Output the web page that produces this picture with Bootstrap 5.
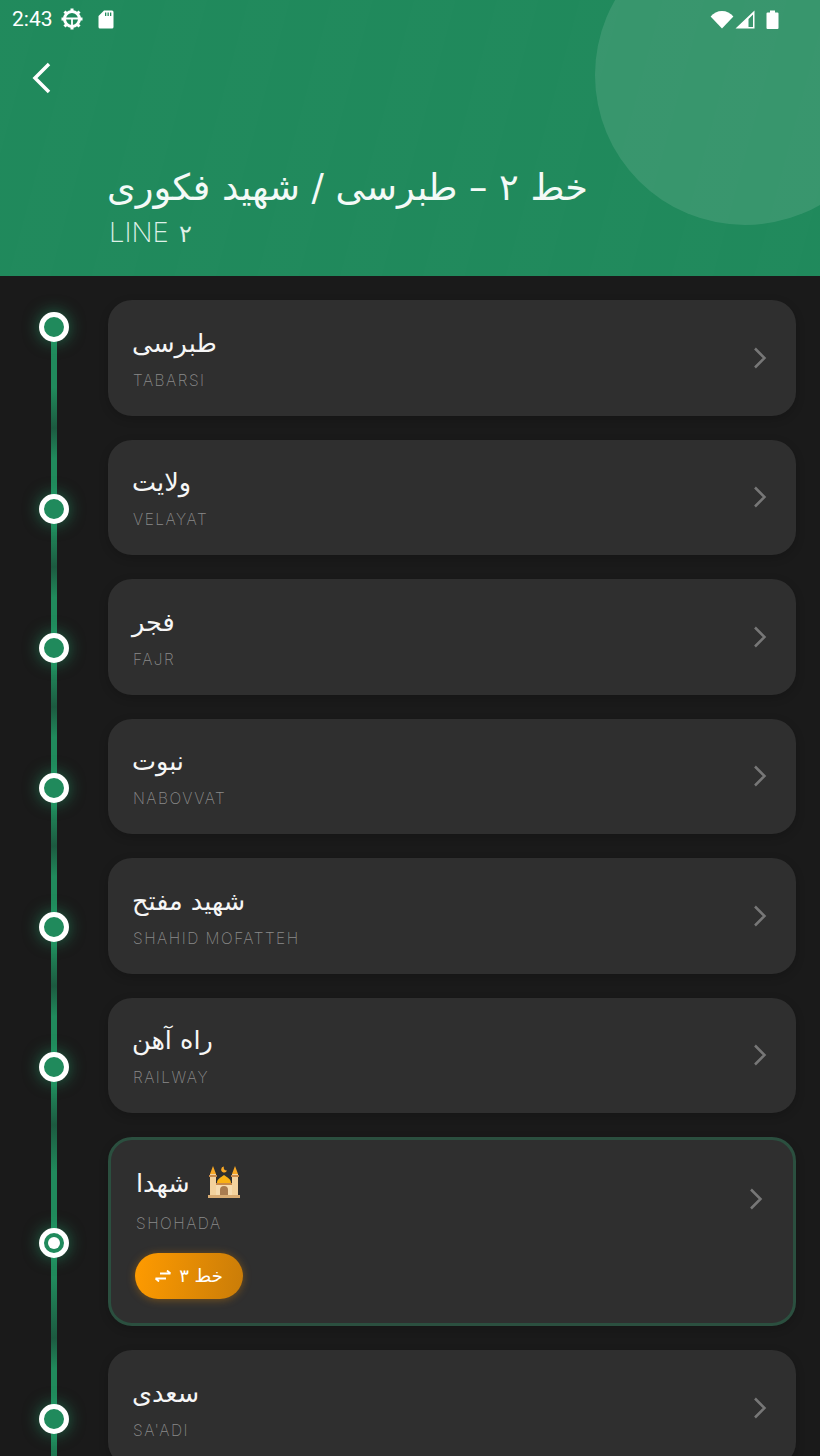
<!DOCTYPE html>
<html lang="fa">
<head>
    <meta charset="UTF-8">
    <meta name="viewport" content="width=device-width, initial-scale=1.0">
    <title>Line 2</title>
    <link href="https://cdn.jsdelivr.net/npm/bootstrap@5.3.0/dist/css/bootstrap.min.css" rel="stylesheet">
    <style>
        body { background: #1a1a1a; font-family: "DejaVu Sans", sans-serif; }
        .line-header { height: 276px; background-color: #208a5c; background-image: repeating-linear-gradient(105deg, rgba(255,255,255,.005) 0 40px, rgba(0,0,0,.005) 40px 80px); }
        .header-disc { position: absolute; width: 300px; height: 300px; top: -75px; left: 595px; border-radius: 50%; background: rgba(255,255,255,.11); }
        .status-row { height: 38px; padding: 0 12px; color: #fff; font: 400 21px/38px Roboto, sans-serif; }
        .status-clock { width: 49px; }
        .status-sd { margin-left: 15px; }
        .status-right { padding-right: 29px; }
        .status-signal { margin-left: 1px; }
        .status-battery { margin-left: 11px; }
        .back-btn { margin: 20px 0 0 28px; height: 40px; }
        .title-block { padding: 65px 0 0 108px; }
        .line-title { font-size: 36.7px; font-weight: 400; line-height: 50px; color: #f4faf7; margin: 0; width: 480px; white-space: nowrap; }
        .line-sub { font: 200 27.5px/32px Inter, sans-serif; color: #dff0e8; margin-top: 3px; padding-left: 1px; }
        .sub-digit { margin-left: 10px; font-size: 24px; }
        .stop-list { padding-top: 12px; }
        .stop-row { padding: 12px 24px 12px 0; }
        .stop-rail { width: 108px; flex: none; }
        .rail-line { position: absolute; left: 51px; top: 0; bottom: 0; width: 6px; background: linear-gradient(180deg, #1c5a40, #208a5c 22%, #208a5c 72%, #1c5a40); }
        .stop-row:first-child .rail-line { top: 39px; background: linear-gradient(180deg, #208a5c, #208a5c 60%, #1c5a40); }
        .stop-dot { position: absolute; left: 39px; top: 50%; margin-top: -3.5px; width: 30px; height: 30px; border: 5px solid #fff; border-radius: 50%; background: #208a5c; box-shadow: 0 0 16px rgba(40,190,125,.5); }
        .stop-row:first-child .stop-dot { top: 24px; margin-top: 0; }
        .stop-dot.is-transfer::after { content: ""; position: absolute; left: 4px; top: 4px; width: 12px; height: 12px; border-radius: 50%; background: #fff; }
        .stop-card { min-height: 115.5px; padding: 0 29px 0 24px; background: #2f2f2f; border-radius: 24px; box-shadow: 0 3px 10px rgba(0,0,0,.18); }
        .stop-card.is-transfer { height: 189px; border: 3px solid #2b4f3f; padding: 0 30px 0 25px; }
        .stop-card.is-transfer .card-arrow { align-self: flex-start; margin-top: 47px; }
        .stop-fa { font-size: 25.5px; line-height: 36px; color: #f6f6f6; height: 36px; }
        .mosque-icon { margin-left: 18px; margin-top: -2px; }
        .stop-en { font: 200 15.5px/20px Inter, sans-serif; letter-spacing: 1.5px; color: #8a8a8a; margin-top: 10px; padding-left: 1px; }
        .is-transfer .stop-en { margin-top: 13px; padding-left: 0; }
        .transfer-pill { width: 108px; height: 46px; margin: 19px 0 0 -1px; border-radius: 23px; background: linear-gradient(100deg, #ff9b00, #c97c08); box-shadow: 0 1px 8px rgba(255,152,0,.35); color: #fff; font-size: 18px; }
    </style>
</head>
<body>
<div class="vh-100 overflow-hidden">

    <!-- Header -->
    <div class="line-header position-relative overflow-hidden">
        <div class="header-disc"></div>
        <div class="status-row d-flex align-items-center position-relative">
            <span class="status-clock">2:43</span>
            <svg width="22" height="22" viewBox="0 0 22 22"><g fill="none" stroke="#fff"><circle cx="11" cy="11" r="7.500" stroke-width="3"/><path d="M11 .5v4M11 17.500v4M.5 11h4M17.500 11h4M3.500 3.500l3 3M15.500 15.500l3 3M18.500 3.500l-3 3M6.500 15.500l-3 3" stroke-width="3"/><path d="M4 10.500h14M11 10.500v7" stroke-width="1.800"/></g></svg>
            <svg width="16" height="19" viewBox="0 0 16 19" class="status-sd"><path fill="#fff" d="M6 .5h8a1.500 1.500 0 0 1 1.500 1.500v15a1.500 1.500 0 0 1-1.500 1.500H2A1.500 1.500 0 0 1 .5 17V6zM7 2.500v3.500h1.300V2.500zm2.500 0v3.500h1.300V2.500zm2.500 0v3.500h1.300V2.500z" fill-rule="evenodd"/></svg>
            <div class="status-right ms-auto d-flex align-items-center">
                <svg width="24" height="19" viewBox="0 0 24 19"><path fill="#fff" d="M12 18.500.6 6.500C3.500 3 7.500 1 12 1s8.500 2 11.400 5.500z"/></svg>
                <svg width="20" height="19" viewBox="0 0 20 19" class="status-signal"><path fill="#fff" fill-rule="evenodd" d="M19.500.5v18H.5zM18 4.500l-4.500 4.500V17H18z"/></svg>
                <svg width="13" height="19" viewBox="0 0 13 19" class="status-battery"><path fill="#fff" d="M4 .5h5v2h2.500a1 1 0 0 1 1 1V18a1 1 0 0 1-1 1h-10a1 1 0 0 1-1-1V3.500a1 1 0 0 1 1-1H4z"/></svg>
            </div>
        </div>
        <div class="back-btn position-relative">
            <svg width="26" height="40" viewBox="0 0 26 40"><path d="M21 6 7 20l14 14" fill="none" stroke="#fff" stroke-width="3.500"/></svg>
        </div>
        <div class="title-block position-relative">
            <h1 class="line-title" dir="rtl">خط ۲ – طبرسی / شهید فکوری</h1>
            <div class="line-sub">LINE<span class="sub-digit">۲</span></div>
        </div>
    </div>

    <!-- Stops -->
    <div id="stopList" class="stop-list"></div>
</div>

<script>
const stops = [
    { fa: 'طبرسی', en: 'TABARSI' },
    { fa: 'ولایت', en: 'VELAYAT' },
    { fa: 'فجر', en: 'FAJR' },
    { fa: 'نبوت', en: 'NABOVVAT' },
    { fa: 'شهید مفتح', en: 'SHAHID MOFATTEH' },
    { fa: 'راه آهن', en: 'RAILWAY' },
    { fa: 'شهدا', en: 'SHOHADA', transfer: true },
    { fa: 'سعدی', en: "SA'ADI" }
];

const mosque = `<svg width="32" height="33" viewBox="0 0 32 33" class="mosque-icon flex-shrink-0">
    <rect x="0" y="30" width="32" height="3" fill="#d8ab72"/>
    <rect x="2" y="9" width="6" height="21" fill="#f3d29d"/><rect x="24" y="9" width="6" height="21" fill="#f3d29d"/>
    <rect x="1" y="10" width="8" height="2" fill="#c98a4a"/><rect x="23" y="10" width="8" height="2" fill="#c98a4a"/>
    <path d="M5 1l3 8H2zM27 1l3 8h-6z" fill="#f9a825"/>
    <rect x="8" y="19" width="16" height="11" fill="#f6dcb0"/>
    <path d="M9 18c0-4 3-5 7-8 4 3 7 4 7 8z" fill="#f9b115"/>
    <path d="M16 1.500a3 3 0 1 0 3 4 2.800 2.800 0 0 1-3-4z" fill="#f9a825"/>
    <rect x="8" y="18" width="16" height="2" fill="#c98a4a"/>
    <path d="M12 30v-5a4 4 0 0 1 8 0v5z" fill="#a97c50"/>
</svg>`;

const chevron = `<svg width="14" height="24" viewBox="0 0 14 24" class="card-arrow flex-shrink-0"><path d="M2 2.500 11.500 12 2 21.500" fill="none" stroke="#777" stroke-width="2.500"/></svg>`;

const swapIcon = `<svg width="16" height="12" viewBox="0 0 16 12"><path d="M15.500 3.500H5M12 .5l3.500 3M.5 8.500H11M4 11.500l-3.500-3" fill="none" stroke="#fff" stroke-width="1.800"/></svg>`;

document.getElementById('stopList').innerHTML = stops.map(s => `
    <div class="stop-row d-flex position-relative">
        <div class="stop-rail">
            <div class="rail-line"></div>
            <div class="stop-dot ${s.transfer ? 'is-transfer' : ''}"></div>
        </div>
        <div class="stop-card flex-grow-1 d-flex align-items-center justify-content-between ${s.transfer ? 'is-transfer' : ''}">
            <div>
                <div class="stop-fa d-flex align-items-center"><span dir="rtl">${s.fa}</span>${s.transfer ? mosque : ''}</div>
                <div class="stop-en">${s.en}</div>
                ${s.transfer ? `<div class="transfer-pill d-flex align-items-center justify-content-center gap-2">${swapIcon}<span dir="rtl">خط ۳</span></div>` : ''}
            </div>
            ${chevron}
        </div>
    </div>`).join('');
</script>
<script src="https://cdn.jsdelivr.net/npm/bootstrap@5.3.0/dist/js/bootstrap.bundle.min.js"></script>
</body>
</html>
